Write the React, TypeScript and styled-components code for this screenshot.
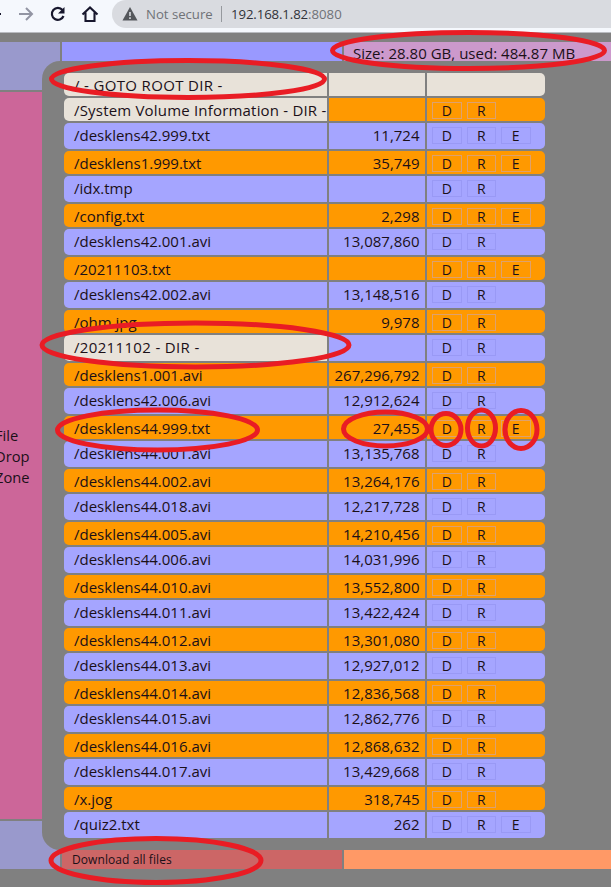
import React from 'react';
import styled, { createGlobalStyle } from 'styled-components';

const GlobalStyle = createGlobalStyle`
  * { box-sizing: border-box; }
  body {
    margin: 0;
    background: #808080;
    font-family: "Open Sans", "Noto Sans", sans-serif;
    color: #1b1018;
    overflow: hidden;
  }
`;

const Page = styled.div`
  position: relative;
  width: 611px;
  height: 887px;
  overflow: hidden;
  background: #808080;
`;

const BrowserBar = styled.header`
  display: flex;
  height: 33px;
  background: #f5f8fd;
  border-bottom: 1px solid #b9bbc0;
`;

const NavIcons = styled.svg`
  flex: none;
  width: 112px;
  height: 32px;
`;

const AddressBar = styled.div`
  display: flex;
  align-items: center;
  flex: 1;
  height: 28px;
  padding-left: 10px;
  border-radius: 14px 0 0 14px;
  background: #d9dbe0;
  font-size: 13.2px;
  color: #6f7277;
  white-space: pre;
`;

const WarningIcon = styled.svg`
  width: 16px;
  height: 14px;
  margin-right: 8px;
`;

const Security = styled.span`
  width: 68px;
  letter-spacing: -0.02px;
`;

const Divider = styled.span`
  width: 1px;
  height: 16px;
  margin: 0 9px 0 7px;
  background: #96999e;
`;

const Host = styled.span`
  color: #303238;
  letter-spacing: -0.1px;
`;

const Port = styled.span`
  color: #6f7277;
`;

const Frame = styled.main`
  display: grid;
  grid-template-columns: 60px 280px 1fr;
  grid-template-rows: 19px 789px 19px;
  column-gap: 2px;
  margin-top: 9px;
`;

const Sidebar = styled.aside`
  grid-column: 1;
  grid-row: 1 / 4;
  display: grid;
  grid-template-rows: 48px 727px 48px;
  row-gap: 2px;
`;

const SideBlock = styled.div`
  background: #9999cc;
`;

const DropZone = styled.div`
  display: flex;
  align-items: center;
  padding-top: 2px;
  background: #cc6699;
  font-size: 14.7px;
  line-height: 21px;
`;

const DropText = styled.div`
  margin-left: -5px;
`;

const Bar = styled.div<{ $tone: string; $column: number; $row: number }>`
  display: flex;
  align-items: center;
  grid-column: ${p => p.$column};
  grid-row: ${p => p.$row};
  background: ${p => p.$tone};
  white-space: pre;
`;

const Storage = styled.span`
  padding: 3px 0 0 9px;
  font-size: 15px;
  letter-spacing: 0.02px;
`;

const Download = styled.span`
  padding-left: 10px;
  font-size: 12px;
  letter-spacing: 0.08px;
`;

const Panel = styled.section`
  grid-column: 2 / 4;
  grid-row: 2;
  z-index: 1;
  margin-left: -20px;
  padding: 12px 0 0 22px;
  border-radius: 18px 0 0 18px;
  background: #808080;
`;

const FileList = styled.div`
  display: flex;
  flex-direction: column;
  gap: 2px;
  width: 481px;
`;

const FileRow = styled.div<{ $tall: boolean }>`
  display: grid;
  grid-template-columns: 263px 96px 118px;
  column-gap: 2px;
  height: ${p => (p.$tall ? 26 : 23)}px;
`;

const tones = { orange: '#ff9900', violet: '#a5a5ff', cream: '#e8e2d9' };
type Tone = keyof typeof tones;

const Cell = styled.div<{ $tone: Tone; $tall: boolean }>`
  display: flex;
  align-items: center;
  min-width: 0;
  padding-bottom: ${p => (p.$tall ? 2 : 0)}px;
  background: ${p => tones[p.$tone]};
  font-size: 15px;
  line-height: 20px;
  white-space: pre;
`;

const NameCell = styled(Cell)<{ $track: number }>`
  padding-left: 10px;
  border-radius: 5px 0 0 5px;
  letter-spacing: ${p => p.$track}px;
`;

const SizeCell = styled(Cell)`
  justify-content: flex-end;
  padding-right: 5.5px;
`;

const ActionCell = styled(Cell)`
  gap: 5px;
  padding-top: ${p => (p.$tall ? 1 : 2)}px;
  padding-left: 5px;
  border-radius: 0 5px 5px 0;
`;

const Action = styled.button<{ $warm: boolean }>`
  width: 29.5px;
  height: 17px;
  padding: 0;
  border: 1px solid ${p => (p.$warm ? '#dda16e' : '#9999f5')};
  background: transparent;
  color: #1b1018;
  font: 14px/14px "Open Sans", "Noto Sans", sans-serif;
`;

const Highlights = styled.svg`
  position: absolute;
  z-index: 2;
  inset: 0;
  pointer-events: none;
`;

const files: [string, string, string][] = [
  ['/ - GOTO ROOT DIR -', '', ''],
  ['/System Volume Information - DIR -', '', 'DR'],
  ['/desklens42.999.txt', '11,724', 'DRE'],
  ['/desklens1.999.txt', '35,749', 'DRE'],
  ['/idx.tmp', '', 'DR'],
  ['/config.txt', '2,298', 'DRE'],
  ['/desklens42.001.avi', '13,087,860', 'DR'],
  ['/20211103.txt', '', 'DRE'],
  ['/desklens42.002.avi', '13,148,516', 'DR'],
  ['/ohm.jpg', '9,978', 'DR'],
  ['/20211102 - DIR -', '', 'DR'],
  ['/desklens1.001.avi', '267,296,792', 'DR'],
  ['/desklens42.006.avi', '12,912,624', 'DR'],
  ['/desklens44.999.txt', '27,455', 'DRE'],
  ['/desklens44.001.avi', '13,135,768', 'DR'],
  ['/desklens44.002.avi', '13,264,176', 'DR'],
  ['/desklens44.018.avi', '12,217,728', 'DR'],
  ['/desklens44.005.avi', '14,210,456', 'DR'],
  ['/desklens44.006.avi', '14,031,996', 'DR'],
  ['/desklens44.010.avi', '13,552,800', 'DR'],
  ['/desklens44.011.avi', '13,422,424', 'DR'],
  ['/desklens44.012.avi', '13,301,080', 'DR'],
  ['/desklens44.013.avi', '12,927,012', 'DR'],
  ['/desklens44.014.avi', '12,836,568', 'DR'],
  ['/desklens44.015.avi', '12,862,776', 'DR'],
  ['/desklens44.016.avi', '12,868,632', 'DR'],
  ['/desklens44.017.avi', '13,429,668', 'DR'],
  ['/x.jog', '318,745', 'DR'],
  ['/quiz2.txt', '262', 'DRE'],
];

// Center x, center y, radius x, radius y
const marks: number[][] = [
  [188, 79, 136.5, 18.5],
  [468.5, 50.5, 136, 18],
  [195.5, 345, 153.5, 22],
  [157.5, 430, 100, 20],
  [385.5, 429, 42, 17],
  [446, 429.5, 15, 16],
  [481.5, 428, 14, 18],
  [521, 429.5, 16, 19],
  [156, 860.5, 105, 22],
];

function FileEntry({ file, index }: { file: [string, string, string]; index: number }) {
  const [name, size, actions] = file;
  const directory = name.endsWith('DIR -');
  const track = !directory ? 0 : name.length > 30 ? 0.19 : 0.34;
  const tall = index > 0 && index % 2 === 0;
  const base: Tone = index === 0 ? 'cream' : tall ? 'violet' : 'orange';
  return (
    <FileRow $tall={tall}>
      <NameCell $tone={directory ? 'cream' : base} $tall={tall} $track={track}>{name}</NameCell>
      <SizeCell $tone={base} $tall={tall}>{size}</SizeCell>
      <ActionCell $tone={base} $tall={tall}>
        {actions.split('').map(a => <Action key={a} $warm={base === 'orange'}>{a}</Action>)}
      </ActionCell>
    </FileRow>
  );
}

export default function App() {
  return (
    <>
      <GlobalStyle />
      <Page>
        <BrowserBar>
          <NavIcons viewBox="0 0 112 32" fill="none">
            <path d="M0 14h1" stroke="#17172d" strokeWidth="2" />
            <path d="M19 14h13M26 8l6 6-6 6" stroke="#9295a3" strokeWidth="2" />
            <path d="M62.5 10A6 6 0 1 0 63.5 16" stroke="#17172d" strokeWidth="2.2" />
            <path d="M64.5 7v6.5H58z" fill="#17172d" />
            <path d="M82.5 14.5L90 7.5l7.5 7M85.5 12.5V21h9v-8.5" stroke="#17172d" strokeWidth="2.1" />
          </NavIcons>
          <AddressBar>
            <WarningIcon viewBox="0 0 16 14">
              <path d="M8 0l7.5 13.5H.5z" fill="#54575b" />
              <path d="M8 5v4M8 10.3V12" stroke="#d9dbe0" strokeWidth="1.6" />
            </WarningIcon>
            <Security>Not secure</Security>
            <Divider />
            <Host>192.168.1.82</Host><Port>:8080</Port>
          </AddressBar>
        </BrowserBar>
        <Frame>
          <Sidebar>
            <SideBlock />
            <DropZone><DropText>File<br />Drop<br />Zone</DropText></DropZone>
            <SideBlock />
          </Sidebar>
          <Bar $tone="#9999ff" $column={2} $row={1} />
          <Bar $tone="#cc99cc" $column={3} $row={1}><Storage>Size: 28.80 GB, used: 484.87 MB</Storage></Bar>
          <Panel>
            <FileList>
              {files.map((file, i) => <FileEntry key={file[0]} file={file} index={i} />)}
            </FileList>
          </Panel>
          <Bar $tone="#cc6666" $column={2} $row={3}><Download>Download all files</Download></Bar>
          <Bar $tone="#ff9966" $column={3} $row={3} />
        </Frame>
        <Highlights width="611" height="887" fill="none" stroke="#e91c24" strokeWidth="5">
          {marks.map(([cx, cy, rx, ry]) => <ellipse key={`${cx}-${cy}`} cx={cx} cy={cy} rx={rx} ry={ry} />)}
        </Highlights>
      </Page>
    </>
  );
}
